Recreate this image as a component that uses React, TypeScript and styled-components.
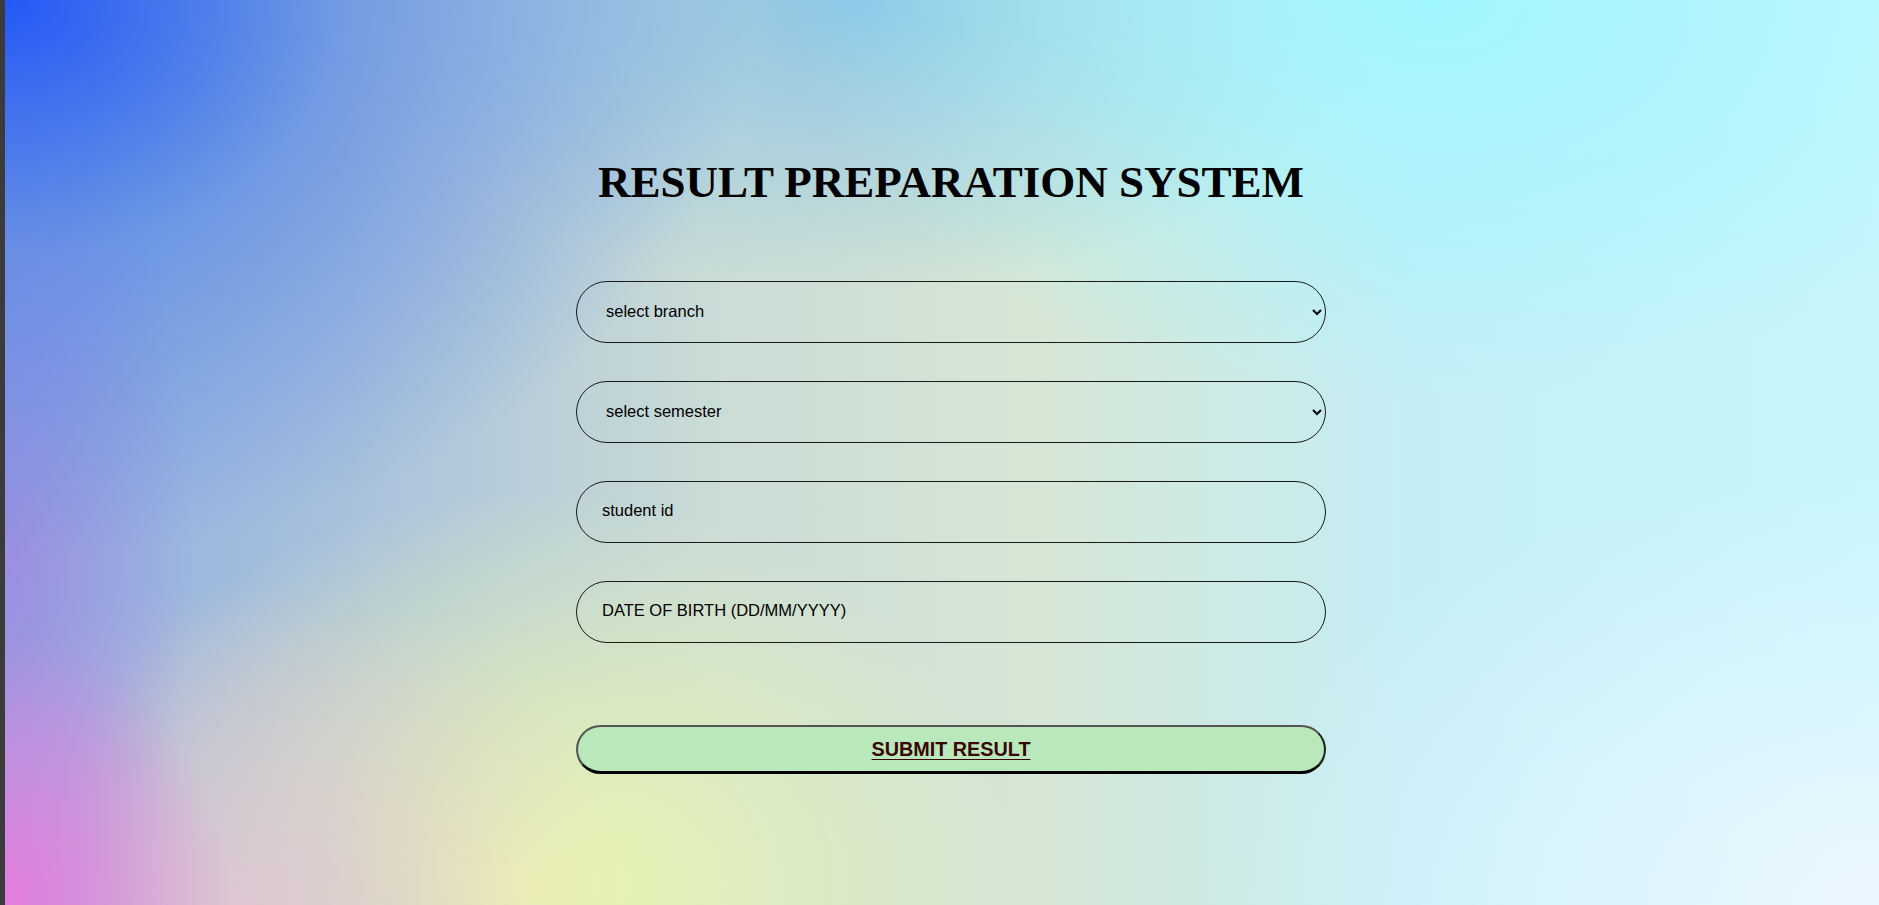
import React from "react";
import styled, { createGlobalStyle } from "styled-components";

const GlobalStyle = createGlobalStyle`
  html, body {
    margin: 0;
    padding: 0;
    height: 100%;
  }
  body {
    font-family: "Liberation Sans", Arial, sans-serif;
    overflow: hidden;
  }
`;

const Page = styled.div`
  display: flex;
  width: 100vw;
  height: 100vh;
`;

const Strip = styled.div`
  width: 5px;
  flex: none;
  background: #3b3b3b;
`;

const Main = styled.main`
  flex: 1;
  display: flex;
  flex-direction: column;
  align-items: center;
  padding: 160px 0 0 18px;
  box-sizing: border-box;
  background:
    radial-gradient(ellipse 40% 62% at 0% 0%, rgba(36, 88, 246, 1) 0%, rgba(70, 125, 232, 0.55) 45%, rgba(120, 160, 225, 0) 100%),
    radial-gradient(ellipse 12% 30% at 0% 100%, rgba(228, 124, 220, 1), rgba(228, 124, 220, 0)),
    radial-gradient(ellipse 10% 55% at 0% 62%, rgba(160, 130, 225, 0.7), rgba(160, 130, 225, 0)),
    radial-gradient(ellipse 22% 36% at 12% 100%, rgba(226, 196, 212, 0.85), rgba(226, 196, 212, 0)),
    radial-gradient(ellipse 26% 44% at 28% 98%, rgba(238, 250, 172, 1), rgba(238, 250, 172, 0)),
    radial-gradient(ellipse 34% 44% at 76% 0%, rgba(160, 246, 255, 1), rgba(160, 246, 255, 0)),
    radial-gradient(ellipse 36% 48% at 100% 100%, rgba(236, 246, 255, 1), rgba(236, 246, 255, 0)),
    radial-gradient(ellipse 28% 32% at 46% 0%, rgba(140, 196, 230, 1), rgba(140, 196, 230, 0)),
    linear-gradient(90deg, #8eaee0 0%, #a8c0dc 18%, #cadcd6 38%, #d6e6d4 55%, #c4eef6 75%, #c6f6fc 100%);
`;

const Form = styled.form`
  width: 750px;
  display: flex;
  flex-direction: column;
`;

const Title = styled.h1`
  margin: 0 0 77px;
  font-family: "Liberation Serif", "Times New Roman", serif;
  font-weight: 700;
  font-size: 45px;
  line-height: 44px;
  color: #000;
  text-align: center;
  white-space: nowrap;
`;

const Fields = styled.div`
  display: flex;
  flex-direction: column;
  gap: 38px;
`;

const fieldBase = `
  box-sizing: border-box;
  width: 100%;
  height: 62px;
  border: 1px solid #1a1a1a;
  border-radius: 31px;
  background: transparent;
  font-family: "Liberation Sans", Arial, sans-serif;
  font-size: 16.5px;
  color: #000;
  outline: none;
  margin: 0;
`;

const Select = styled.select`
  ${fieldBase}
  padding: 0 6px 2px 25px;
`;

const Input = styled.input`
  ${fieldBase}
  padding: 0 25px 3px;
  &::placeholder {
    color: #000;
    opacity: 1;
  }
`;

const SubmitButton = styled.button`
  box-sizing: border-box;
  margin-top: 82px;
  width: 100%;
  height: 49px;
  border-radius: 25px;
  border-style: solid;
  border-width: 2px 2px 3px 2px;
  border-color: #555 #222 #000 #555;
  background: #b9e8bb;
  font-family: "Liberation Sans", Arial, sans-serif;
  font-weight: 700;
  font-size: 19.8px;
  color: #3a0505;
  text-decoration: underline;
  text-underline-offset: 3px;
  cursor: pointer;
`;

export default function App() {
  return (
    <>
      <GlobalStyle />
      <Page>
        <Strip />
        <Main>
          <Form onSubmit={(e) => e.preventDefault()}>
            <Title>RESULT PREPARATION SYSTEM</Title>
            <Fields>
              <Select defaultValue="">
                <option value="">select branch</option>
                <option value="cse">CSE</option>
                <option value="ece">ECE</option>
              </Select>
              <Select defaultValue="">
                <option value="">select semester</option>
                <option value="1">1</option>
                <option value="2">2</option>
              </Select>
              <Input type="text" placeholder="student id" />
              <Input type="text" placeholder="DATE OF BIRTH (DD/MM/YYYY)" />
            </Fields>
            <SubmitButton type="submit">SUBMIT RESULT</SubmitButton>
          </Form>
        </Main>
      </Page>
    </>
  );
}
